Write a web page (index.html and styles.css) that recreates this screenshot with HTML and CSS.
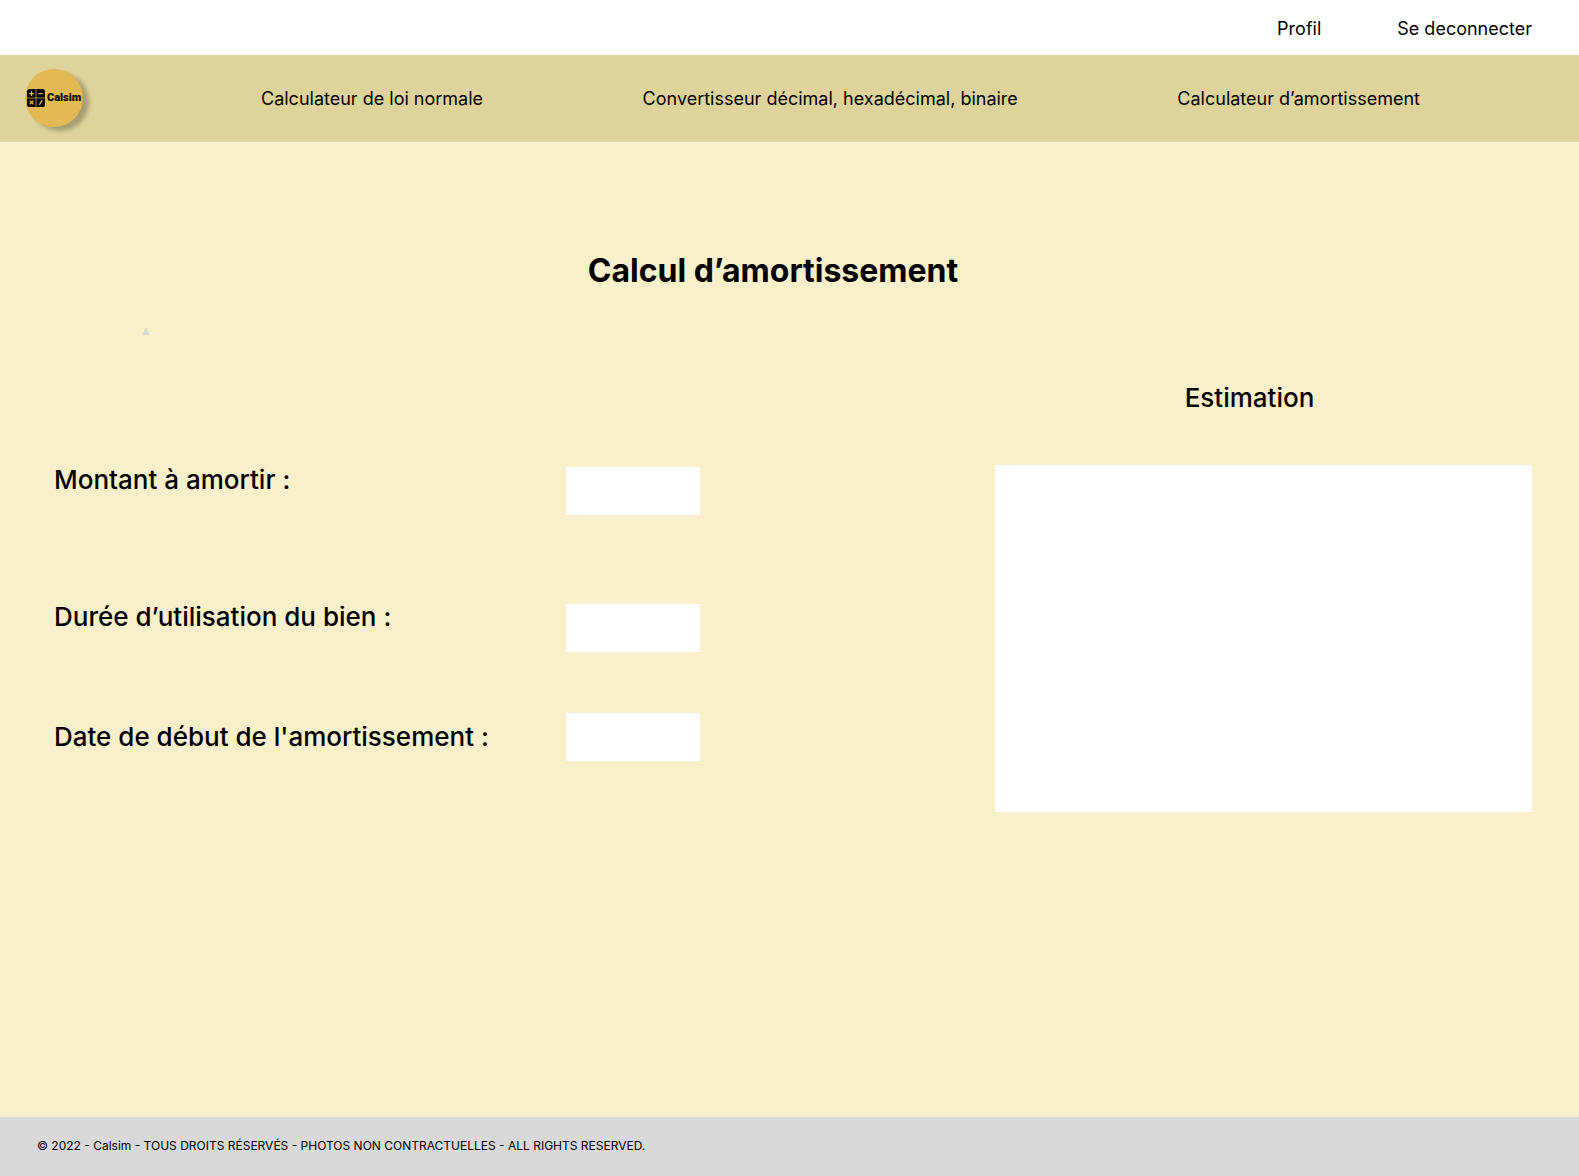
FILE: index.html
```html
<!DOCTYPE html>
<html lang="fr">
<head>
  <meta charset="utf-8">
  <meta name="viewport" content="width=device-width, initial-scale=1">
  <title>Calsim - Calcul d’amortissement</title>
  <link rel="stylesheet" href="styles.css">
</head>
<body>
  <header>
    <nav class="account" aria-label="Compte">
      <a href="#profil">Profil</a>
      <a href="#deconnexion">Se deconnecter</a>
    </nav>
    <nav class="main-nav" aria-label="Calculateurs">
      <a class="logo" href="#accueil">
        <svg class="logo-icon" viewBox="0 0 18 18" aria-hidden="true">
          <rect width="18" height="18" rx="2.5"/>
          <path class="logo-split" d="M9 0v18M0 9h18"/>
          <path class="logo-signs" d="M4.5 2.3v4.8M2.1 4.7h4.8M11.4 4.7h4.4M2.8 11.6l3.6 3.6M6.4 11.6l-3.6 3.6M15.3 11.1l-3 4.8"/>
        </svg>
        <span>Calsim</span>
      </a>
      <div class="nav-links">
        <a href="#loi-normale">Calculateur de loi normale</a>
        <a href="#convertisseur">Convertisseur décimal, hexadécimal, binaire</a>
        <a href="#amortissement">Calculateur d’amortissement</a>
      </div>
    </nav>
  </header>

  <main>
    <h1>Calcul d’amortissement</h1>
    <svg class="marker" viewBox="0 0 8 8" aria-hidden="true"><path d="M4 0l3.5 8h-7z"/></svg>
    <div class="content">
      <form class="fields">
        <div class="field field-spaced">
          <label for="montant">Montant à amortir :</label>
          <input id="montant" type="text">
        </div>
        <div class="field">
          <label for="duree">Durée d’utilisation du bien :</label>
          <input id="duree" type="text">
        </div>
        <div class="field field-centered">
          <label for="debut">Date de début de l'amortissement :</label>
          <input id="debut" type="text">
        </div>
      </form>
      <section class="estimation" aria-labelledby="estimation-title">
        <h2 id="estimation-title">Estimation</h2>
        <output class="result" for="montant duree debut"></output>
      </section>
    </div>
  </main>

  <footer>© 2022 - Calsim - TOUS DROITS RÉSERVÉS - PHOTOS NON CONTRACTUELLES - ALL RIGHTS RESERVED.</footer>
</body>
</html>
```

FILE: styles.css
```css
* {
  box-sizing: border-box;
}

body {
  display: flex;
  flex-direction: column;
  min-height: 100vh;
  margin: 0;
  background: #f8efcb;
  color: #000;
  font-family: Inter, "Liberation Sans", sans-serif;
  font-size: 18px;
  line-height: 22px;
}

a {
  color: inherit;
  text-decoration: none;
}

.account {
  display: flex;
  justify-content: flex-end;
  gap: 76px;
  padding: 18px 47px 15px;
  background: #fff;
}

.main-nav {
  display: flex;
  align-items: center;
  padding: 14px 25px 15px;
  background: #ded39a;
}

.logo {
  display: flex;
  flex: none;
  align-items: center;
  gap: 2px;
  width: 58px;
  height: 58px;
  padding-left: 2px;
  border-radius: 50%;
  background: #e2b953;
  box-shadow: 6px 4px 4px rgba(0, 0, 0, 0.25);
  font-family: Roboto, sans-serif;
  font-size: 11px;
  font-weight: 900;
}

.logo-icon {
  flex: none;
  width: 18px;
  height: 18px;
}

.logo-split,
.logo-signs {
  fill: none;
  stroke: #e2b953;
}

.logo-split {
  stroke-width: 0.7;
}

.logo-signs {
  stroke-width: 1.3;
}

.nav-links {
  display: flex;
  flex: 1;
  justify-content: space-between;
  padding: 2px 134px 0 178px;
}

main {
  flex: 1;
  padding: 109px 47px 108px 54px;
}

h1 {
  margin: 0;
  padding-right: 40px;
  font-size: 32px;
  font-weight: 700;
  line-height: 40px;
  text-align: center;
}

.marker {
  display: block;
  width: 8px;
  height: 8px;
  margin: 36px 0 0 88px;
  fill: #d9d9d9;
}

.content {
  display: grid;
  grid-template-columns: 941fr 537fr;
  padding-top: 47px;
}

.fields {
  display: flex;
  flex-direction: column;
  gap: 61px;
  padding-top: 85px;
}

.field {
  display: grid;
  grid-template-columns: 512px 134px;
  font-size: 26px;
  line-height: 26px;
}

.field-spaced {
  padding-bottom: 28px;
}

.field-centered {
  align-items: center;
}

label,
h2 {
  font-weight: 500;
}

input {
  width: 100%;
  height: 48px;
  padding: 0 12px;
  border: 0;
  border-radius: 0;
  background: #fff;
  font: inherit;
  font-size: 18px;
}

.estimation {
  display: flex;
  flex-direction: column;
  gap: 51px;
}

h2 {
  margin: 0;
  padding-right: 28px;
  font-size: 26px;
  line-height: 32px;
  text-align: center;
}

.result {
  display: block;
  min-height: 347px;
  background: #fff;
}

footer {
  padding: 18px 37px 19px;
  background: #d9d9d9;
  font-size: 12px;
}
```
